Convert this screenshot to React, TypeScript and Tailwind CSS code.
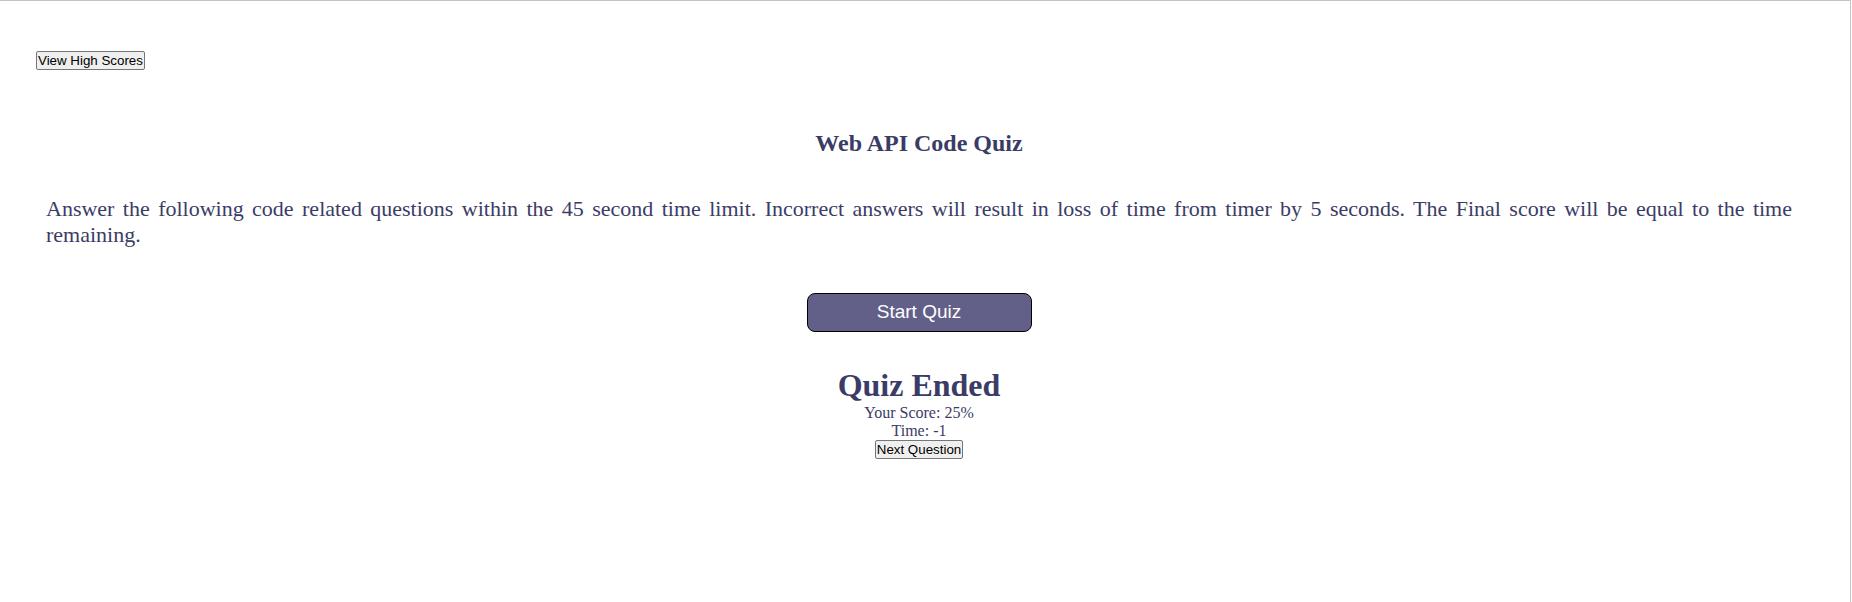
import * as React from 'react';

// Quiz start page: intro text, start button, and the "ended" summary block.
const INTRO =
  'Answer the following code related questions within the 45 second time limit. Incorrect answers will result in loss of time from timer by 5 seconds. The Final score will be equal to the time remaining.';

function NativeButton({ children }: { children: React.ReactNode }) {
  return (
    <button
      type="button"
      className="h-[19px] rounded-[2px] border border-[#767676] bg-[#efefef] px-[1px] font-['Liberation_Sans',Arial,sans-serif] text-[13.333px] leading-[15px] text-black"
    >
      {children}
    </button>
  );
}

export default function App() {
  const [score] = React.useState(25);
  const [time] = React.useState(-1);

  return (
    <div className="min-h-[602px] w-[1851px] border-r border-t border-[#c4c4c4] bg-white font-['Liberation_Serif','Times_New_Roman',serif] text-[#3b3c66]">
      <header className="flex pl-[36px] pt-[50px]">
        <NativeButton>View High Scores</NativeButton>
      </header>

      <main className="flex flex-col pl-[46px] pr-[58px]">
        <h1 className="mt-[59px] text-center text-[24px] font-bold leading-[28px]">
          Web API Code Quiz
        </h1>
        <p className="mt-[39px] text-justify text-[22px] leading-[26px]">{INTRO}</p>

        <div className="mt-[45px] flex justify-center">
          <button
            type="button"
            className="h-[39px] w-[225px] rounded-[8px] border border-black bg-[#626089] font-['Liberation_Sans',Arial,sans-serif] text-[19px] text-white"
          >
            Start Quiz
          </button>
        </div>

        <section className="mt-[35px] flex flex-col items-center">
          <h2 className="text-[32px] font-bold leading-[37px]">Quiz Ended</h2>
          <p className="text-[16px] leading-[18px]">Your Score: {score}%</p>
          <p className="text-[16px] leading-[18px]">Time: {time}</p>
          <NativeButton>Next Question</NativeButton>
        </section>
      </main>
    </div>
  );
}
